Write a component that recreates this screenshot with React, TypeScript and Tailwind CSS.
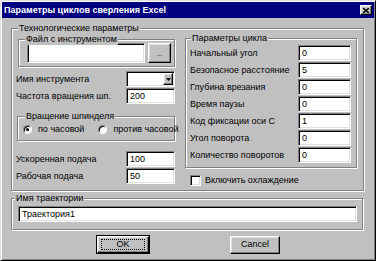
import React from "react";

const font = "font-['Liberation_Sans',Arial,sans-serif]";

function Group({
  label,
  className,
  labelClass,
  children,
}: {
  label: string;
  className?: string;
  labelClass?: string;
  children?: React.ReactNode;
}) {
  return (
    <div
      className={`relative border border-[#808080] shadow-[inset_1px_1px_0_#fff,1px_1px_0_#fff] ${className ?? ""}`}
    >
      <span
        className={`absolute -top-[6px] whitespace-nowrap bg-[#c0c0c0] px-[1px] leading-[11px] ${labelClass ?? "left-[5px]"}`}
      >
        {label}
      </span>
      {children}
    </div>
  );
}

function Field({ value, className }: { value?: string; className?: string }) {
  return (
    <div
      className={`flex items-center bg-white border border-[#808080] border-r-white border-b-white shadow-[inset_1px_1px_0_#000,inset_-1px_-1px_0_#dfdfdf] pl-[3px] leading-none text-black ${className ?? ""}`}
    >
      {value}
    </div>
  );
}

function Button({
  children,
  className,
}: {
  children: React.ReactNode;
  className?: string;
}) {
  return (
    <div
      className={`flex items-center justify-center border border-white border-r-black border-b-black shadow-[inset_-1px_-1px_0_#808080,inset_1px_1px_0_#dfdfdf] bg-[#c0c0c0] leading-none ${className ?? ""}`}
    >
      {children}
    </div>
  );
}

function Row({
  label,
  value,
  fieldWidth,
}: {
  label: string;
  value: string;
  fieldWidth: string;
}) {
  return (
    <div className="flex items-center justify-between h-[16px]">
      <span className="whitespace-nowrap leading-none">{label}</span>
      <Field value={value} className={`${fieldWidth} h-[16px]`} />
    </div>
  );
}

function Radio({ checked, label }: { checked?: boolean; label: string }) {
  return (
    <div className="flex items-center">
      <div className="flex items-center justify-center w-[9px] h-[9px] rounded-full bg-white border border-[#808080] border-r-white border-b-white shadow-[inset_1px_1px_0_#000]">
        {checked && <div className="w-[3px] h-[3px] rounded-full bg-black" />}
      </div>
      <span className="ml-[6px] whitespace-nowrap leading-none">{label}</span>
    </div>
  );
}

export default function App() {
  return (
    <div
      className={`w-[376px] h-[261px] bg-[#c0c0c0] border border-[#dfdfdf] border-r-black border-b-black shadow-[inset_1px_1px_0_#fff,inset_-1px_-1px_0_#808080] text-[9px] text-black ${font} flex flex-col overflow-hidden`}
    >
      {/* title bar */}
      <div className="mx-[1px] mt-[1px] h-[16px] bg-[#000080] flex items-center justify-between pl-[2px] pr-[2px]">
        <span className="text-white font-bold whitespace-nowrap leading-none">
          Параметры циклов сверления Excel
        </span>
        <Button className="w-[12px] h-[10px]">
          <svg width="6" height="5" viewBox="0 0 6 5">
            <path d="M0 0L6 5M6 0L0 5" stroke="#000" strokeWidth="1.4" />
          </svg>
        </Button>
      </div>

      {/* technological params */}
      <Group
        label="Технологические параметры"
        labelClass="left-[6px]"
        className="ml-[10px] mt-[10px] w-[353px] h-[163px] flex items-start"
      >
        <div className="ml-[4px] w-[159px] flex flex-col">
          <Group
            label="Файл с инструментом"
            labelClass="left-[6px]"
            className="mt-[10px] ml-[2px] w-[157px] h-[28px] flex gap-[3px] pl-[8px] pt-[3px]"
          >
            <Field className="w-[118px] h-[20px]" />
            <Button className="w-[23px] h-[20px] text-[7px]">...</Button>
          </Group>

          <div className="mt-[4px] flex items-center justify-between h-[16px]">
            <span className="whitespace-nowrap leading-none">Имя инструмента</span>
            <div className="w-[49px] h-[16px] flex bg-white border border-[#808080] border-r-white border-b-white shadow-[inset_1px_1px_0_#000,inset_-1px_-1px_0_#dfdfdf] justify-end p-[1px]">
              <Button className="w-[10px] h-full">
                <svg width="5" height="3" viewBox="0 0 5 3">
                  <path d="M0 0H5L2.5 3Z" fill="#000" />
                </svg>
              </Button>
            </div>
          </div>
          <div className="mt-[1px]">
            <Row label="Частота вращения шп." value="200" fieldWidth="w-[49px]" />
          </div>

          <Group
            label="Вращение шпинделя"
            labelClass="left-[7px]"
            className="mt-[12px] ml-[1px] w-[158px] h-[25px] flex items-center pl-[5px] pt-[2px]"
          >
            <Radio checked label="по часовой" />
            <div className="ml-[14px]">
              <Radio label="против часовой" />
            </div>
          </Group>

          <div className="mt-[10px]">
            <Row label="Ускоренная подача" value="100" fieldWidth="w-[49px]" />
          </div>
          <div className="mt-[1px]">
            <Row label="Рабочая подача" value="50" fieldWidth="w-[49px]" />
          </div>
        </div>

        <div className="ml-[10px] flex flex-col">
          <Group
            label="Параметры цикла"
            labelClass="left-[5px]"
            className="mt-[9px] w-[172px] h-[130px] flex flex-col gap-[1px] pt-[6px] pl-[4px] pr-[5px]"
          >
            <Row label="Начальный угол" value="0" fieldWidth="w-[53px]" />
            <Row label="Безопасное расстояние" value="5" fieldWidth="w-[53px]" />
            <Row label="Глубина врезания" value="0" fieldWidth="w-[53px]" />
            <Row label="Время паузы" value="0" fieldWidth="w-[53px]" />
            <Row label="Код фиксации оси С" value="1" fieldWidth="w-[53px]" />
            <Row label="Угол поворота" value="0" fieldWidth="w-[53px]" />
            <Row label="Количество поворотов" value="0" fieldWidth="w-[53px]" />
          </Group>
          <div className="mt-[7px] ml-[5px] flex items-center">
            <div className="w-[11px] h-[11px] bg-white border border-[#808080] border-r-white border-b-white shadow-[inset_1px_1px_0_#000,inset_-1px_-1px_0_#dfdfdf]" />
            <span className="ml-[4px] whitespace-nowrap leading-none">Включить охлаждение</span>
          </div>
        </div>
      </Group>

      {/* trajectory */}
      <Group
        label="Имя траектории"
        labelClass="left-[3px]"
        className="ml-[10px] mt-[7px] w-[352px] h-[32px] pl-[6px] pt-[7px]"
      >
        <Field value="Траектория1" className="w-[339px] h-[16px]" />
      </Group>

      {/* buttons */}
      <div className="mt-[5px] flex items-center">
        <div className="ml-[95px] border border-black">
          <Button className="w-[52px] h-[17px]">
            <span className="flex items-center justify-center w-[44px] h-[11px] border border-dotted border-black leading-none">
              OK
            </span>
          </Button>
        </div>
        <Button className="ml-[80px] w-[50px] h-[18px]">Cancel</Button>
      </div>
    </div>
  );
}
